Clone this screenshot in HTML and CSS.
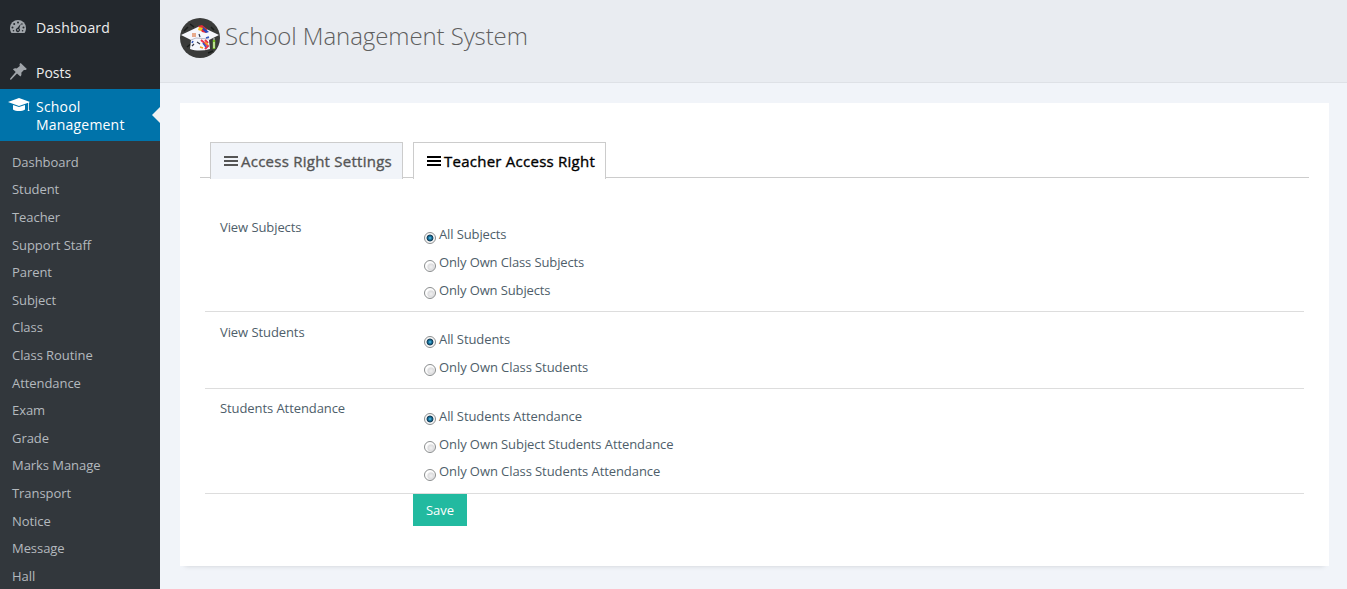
FILE: index.html
```html
<!DOCTYPE html>
<html lang="en">
<head>
<meta charset="utf-8">
<title>School Management System</title>
<link rel="stylesheet" href="styles.css">
</head>
<body>
<div class="layout">
  <nav class="sidebar">
    <a class="top-item dashboard">
      <svg class="icon" width="16" height="13" viewBox="0 0 16 13"><path fill="#a0a5aa" d="M8 0a8 8 0 0 0-8 8c0 2 .6 3.600 1.500 5h13c.9-1.400 1.500-3 1.500-5a8 8 0 0 0-8-8z"/><g fill="#23282d"><circle cx="8" cy="2.500" r="1"/><circle cx="4.200" cy="3.900" r="1"/><circle cx="2.500" cy="7.500" r="1"/><circle cx="13.500" cy="7.500" r="1"/><circle cx="11.900" cy="4" r=".8"/><path d="M10.800 3.800 9.300 8.600a2 2 0 1 1-2-.5z"/><circle cx="3.500" cy="10.800" r=".8"/><circle cx="12.600" cy="10.800" r=".8"/></g><circle cx="8" cy="9.900" r=".8" fill="#a0a5aa"/></svg>
      <span>Dashboard</span>
    </a>
    <a class="top-item posts">
      <svg class="icon" width="17" height="17" viewBox="0 0 17 17"><path fill="#a0a5aa" d="m10.700 0 6.200 6-1.300 1.100-1.700-.2-2.600 2.900c.4 1.600.1 2.800-.9 3.800L7 10.400 1 16.700l-1-.2.200-.9L5.700 9 2.900 6.300c1.100-1 2.600-1.300 3.800-.7l3.100-2.700L9.500 1z"/></svg>
      <span>Posts</span>
    </a>
    <a class="top-item school">
      <svg class="icon" width="22" height="14" viewBox="0 0 22 14"><path fill="#fff" d="M11 0 22 3.900l-1 .5v7.100l.6 1.500h-2l.6-1.500V4.700L11 8 0 4z"/><path fill="#fff" d="m5 7 6 1.900L17 7v4.500c-1.500 1-3.700 1.500-6 1.500s-4.500-.5-6-1.500z"/></svg>
      <span>School<br>Management</span>
    </a>
    <ul class="submenu">
      <li>Dashboard</li><li>Student</li><li>Teacher</li><li>Support Staff</li><li>Parent</li><li>Subject</li><li>Class</li><li>Class Routine</li><li>Attendance</li><li>Exam</li><li>Grade</li><li>Marks Manage</li><li>Transport</li><li>Notice</li><li>Message</li><li>Hall</li>
    </ul>
  </nav>
  <main class="content">
    <header class="page-title">
      <svg class="logo" width="40" height="40" viewBox="0 0 40 40"><circle cx="20" cy="20" r="20" fill="#3a3b3a"/><path d="M4 13 8 9M7 29l5-4M28 35l5-2M31 9l3 3M10 6l4 3" stroke="#191d1b" stroke-width="1.500"/><path d="m20 8-19 9 10 5-1 9c6 2 13 2 20 0l-1-9 10-5z" fill="#f6f7fc"/><path d="m11 22 5-2 13 1" fill="none" stroke="#b9bac8"/><path d="m18 8 4-1 5 4-1 4-4-1z" fill="#e52b38"/><path d="m23 9 6 5-3 1-4-4z" fill="#2948b8"/><path d="m19 9 4 1-2 3-3-1z" fill="#f5c51b"/><rect x="12" y="15" width="4" height="4" fill="#e7aa8c"/><path d="m19 16 1 3M12 28l2-2M17 24l3 2" stroke="#353848" stroke-width="1.200"/><path d="m21 22 7 6-3 3M25 22l3 3" fill="none" stroke="#ed3049" stroke-width="2"/><path d="m23 25 3 4M12 25l1-2M26 20l3-1" stroke="#3358bd" stroke-width="1.600"/><path d="m25 24 3 3M20 29l3 1" stroke="#f2a323" stroke-width="1.500"/><path d="M34 20v5" stroke="#dbe7d0"/><path d="M34 22v9" stroke="#74bf20" stroke-width="2.500"/><path d="M34 24v6" stroke="#fff"/></svg>
      <h1>School Management System</h1>
    </header>
    <section class="panel">
      <div class="tabs">
        <a class="tab first"><svg class="bars" width="14" height="10" viewBox="0 0 14 10"><path d="M0 0h14v2H0zm0 4h14v2H0zm0 4h14v2H0z" fill="currentColor"/></svg><span>Access Right Settings</span></a>
        <a class="tab active"><svg class="bars" width="14" height="10" viewBox="0 0 14 10"><path d="M0 0h14v2H0zm0 4h14v2H0zm0 4h14v2H0z" fill="currentColor"/></svg><span>Teacher Access Right</span></a>
      </div>
      <form class="settings">
        <div class="row">
          <div class="label">View Subjects</div>
          <div class="options">
            <label><i class="radio checked"></i><span>All Subjects</span></label>
            <label><i class="radio"></i><span>Only Own Class Subjects</span></label>
            <label><i class="radio"></i><span>Only Own Subjects</span></label>
          </div>
        </div>
        <div class="row">
          <div class="label">View Students</div>
          <div class="options">
            <label><i class="radio checked"></i><span>All Students</span></label>
            <label><i class="radio"></i><span>Only Own Class Students</span></label>
          </div>
        </div>
        <div class="row">
          <div class="label">Students Attendance</div>
          <div class="options">
            <label><i class="radio checked"></i><span>All Students Attendance</span></label>
            <label><i class="radio"></i><span>Only Own Subject Students Attendance</span></label>
            <label><i class="radio"></i><span>Only Own Class Students Attendance</span></label>
          </div>
        </div>
        <button class="save" type="button">Save</button>
      </form>
    </section>
  </main>
</div>
</body>
</html>
```
FILE: styles.css
```css
* { box-sizing: border-box; }
body { margin: 0; background: #f1f4f9; font: 13px/18px "Open Sans", sans-serif; color: #4e5e6a; }
.layout { display: flex; height: 589px; overflow: hidden; }
.sidebar { width: 160px; flex: none; background: #23282d; color: #eee; font-size: 14px; letter-spacing: .2px; }
.top-item { display: flex; align-items: flex-start; }
.icon { flex: none; display: block; }
.dashboard { height: 60px; padding: 19px 0 0 10px; gap: 10px; }
.dashboard .icon { margin-top: 1px; }
.posts { height: 29px; padding: 4px 0 0 10px; gap: 9px; letter-spacing: 0; }
.posts .icon { margin-top: -1px; }
.school { height: 52px; padding: 9px 0 0 8px; gap: 6px; background: #0073aa; color: #fff; position: relative; }
.school::after { content: ""; position: absolute; right: 0; top: 18px; border: 8px solid transparent; border-left: 0; border-right-color: #f1f1f1; }
.submenu { margin: 0; padding: 7.8px 12px 0; height: 448px; list-style: none; background: #32373c; color: #b4b9be; font-size: 13px; letter-spacing: -.06px; }
.submenu li { height: 27.6px; line-height: 27.6px; }
.content { flex: 1; min-width: 0; }
.page-title { height: 83px; display: flex; padding: 18px 0 0 20px; gap: 5px; background: #e9ecf1; border-bottom: 1px solid #dee1e6; }
.page-title h1 { margin: 0; font-size: 24px; line-height: 36px; font-weight: 300; color: #5f5f5f; letter-spacing: -.09px; }
.panel { margin: 20px 18px 0 20px; height: 463px; padding: 39px 20px 0; background: #fff; box-shadow: 0 5px 5px -5px rgba(0, 0, 0, .15); }
.tabs { display: flex; gap: 10px; height: 36px; padding-left: 10px; border-bottom: 1px solid #ccc; }
.tab { display: flex; width: 193px; height: 37px; padding: 0 0 0 13px; align-items: center; gap: 3px; border: 1px solid #ccc; border-bottom: 0; background: #f1f4f9; color: #555; font-size: 15px; font-weight: 500; -webkit-text-stroke: .35px currentColor; letter-spacing: .25px; white-space: nowrap; }
.tab.active { background: #fff; color: #000; }
.bars { flex: none; }
.settings { padding: 29px 5px 0; }
.row { display: flex; height: 105px; border-bottom: 1px solid #ddd; letter-spacing: -.08px; }
.row:nth-child(2) { height: 77px; }
.label { width: 219px; padding: 11px 0 0 15px; }
.row:nth-child(3) .label { padding-top: 10px; }
.options { padding-top: 14px; }
.options label { display: flex; height: 27.7px; line-height: 27.7px; gap: 3px; }
.row:first-child .options label { height: 27.8px; line-height: 27px; letter-spacing: -.12px; }
.radio { width: 12px; height: 12px; border: 1px solid #8a8d8e; border-radius: 50%; background: radial-gradient(circle at 60% 60%, #f1f1f1 0, #dcdcde 3px, #f4f4f4 4px, #fff 5px); }
.row:first-child .radio { margin-top: 10.8px; }
.row:nth-child(n+2) .radio { margin-top: 10.2px; }
.radio.checked { background: radial-gradient(circle at 5px 5px, #66ccf0 0, #1b79a5 1.5px, #123b56 3px, #eee 3.8px, #fff 5px); }
.save { display: block; margin-left: 208px; width: 54px; height: 32px; border: 0; padding: 0; background: #22baa0; color: #fff; font: 13px "Open Sans", sans-serif; }
```
